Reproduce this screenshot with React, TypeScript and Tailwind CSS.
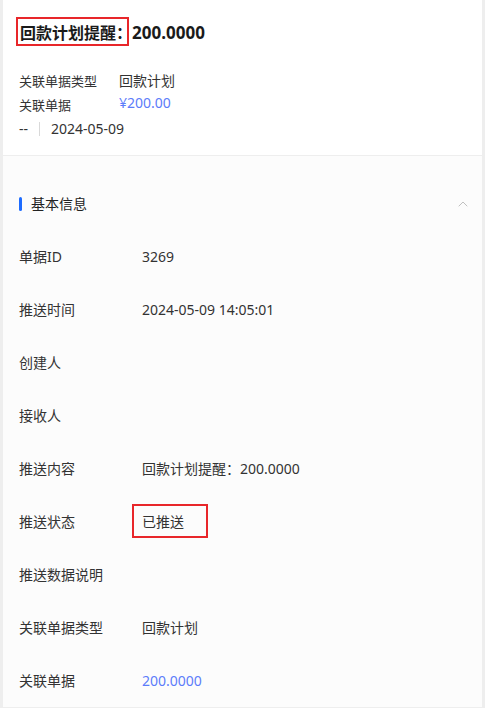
import { ChevronUp } from "lucide-react";

const font = { fontFamily: '"Noto Sans", "Noto Sans CJK SC", sans-serif' };

const rows: { label: string; value: string; link?: boolean; marked?: boolean }[] = [
    { label: "单据ID", value: "3269" },
    { label: "推送时间", value: "2024-05-09 14:05:01" },
    { label: "创建人", value: "" },
    { label: "接收人", value: "" },
    { label: "推送内容", value: "回款计划提醒：200.0000" },
    { label: "推送状态", value: "已推送", marked: true },
    { label: "推送数据说明", value: "" },
    { label: "关联单据类型", value: "回款计划" },
    { label: "关联单据", value: "200.0000", link: true },
];

export default function App() {
    return (
        <div className="w-[485px] h-[708px] bg-[#eeeeee] px-[3px] pb-[3px] overflow-hidden" style={font}>
            <div className="h-full flex flex-col bg-white">
                {/* Header */}
                <div className="px-4 pt-[21px] pb-[15px] border-b border-[#eeeeee]">
                    <h1 className="text-[16px] leading-[24px] font-bold text-[#1a1a1a] pl-[1px]">
                        <span className="relative">
                            回款计划提醒：
                            <span className="absolute -left-[4px] right-[3px] -top-[5px] -bottom-[2px] border-2 border-[#e8262a]" />
                        </span>
                        <span className="text-[17px]">200.0000</span>
                    </h1>

                    <div className="mt-[25px] leading-[22px] text-[#333]">
                        <div className="flex items-center">
                            <span className="w-[100px] text-[13px]">关联单据类型</span>
                            <span className="text-[14px]">回款计划</span>
                        </div>
                        <div className="flex items-center">
                            <span className="w-[100px] text-[13px] translate-y-[2px]">关联单据</span>
                            <span className="text-[14px] text-[#5c7cfa]">¥200.00</span>
                        </div>
                        <div className="flex items-center mt-[4px] text-[14px]">
                            <span>--</span>
                            <span className="mx-[11px] w-px h-[14px] bg-[#d9d9d9]" />
                            <span>2024-05-09</span>
                        </div>
                    </div>
                </div>

                {/* Basic info */}
                <div className="flex-1 bg-[#fcfcfc] px-4">
                    <div className="mt-[38px] flex items-center justify-between">
                        <div className="flex items-center gap-[9px]">
                            <span className="w-[3px] h-[14px] rounded-full bg-[#1e6cff]" />
                            <span className="text-[14px] leading-[20px] text-[#222]">基本信息</span>
                        </div>
                        <ChevronUp className="w-4 h-4 text-[#c0c0c0] -mr-[5px]" strokeWidth={1.5} />
                    </div>

                    <div className="mt-[16px]">
                        {rows.map((r) => (
                            <div key={r.label} className="h-[53px] flex items-center text-[14px] leading-[20px]">
                                <span className="w-[123px] text-[#333]">{r.label}</span>
                                <span className={r.link ? "text-[#5c7cfa]" : "text-[#333]"}>
                                    {r.marked ? (
                                        <span className="relative">
                                            {r.value}
                                            <span className="absolute -left-[10px] -right-[24px] -top-[8px] -bottom-[7px] border-2 border-[#e8262a]" />
                                        </span>
                                    ) : (
                                        r.value
                                    )}
                                </span>
                            </div>
                        ))}
                    </div>
                </div>
            </div>
        </div>
    );
}
